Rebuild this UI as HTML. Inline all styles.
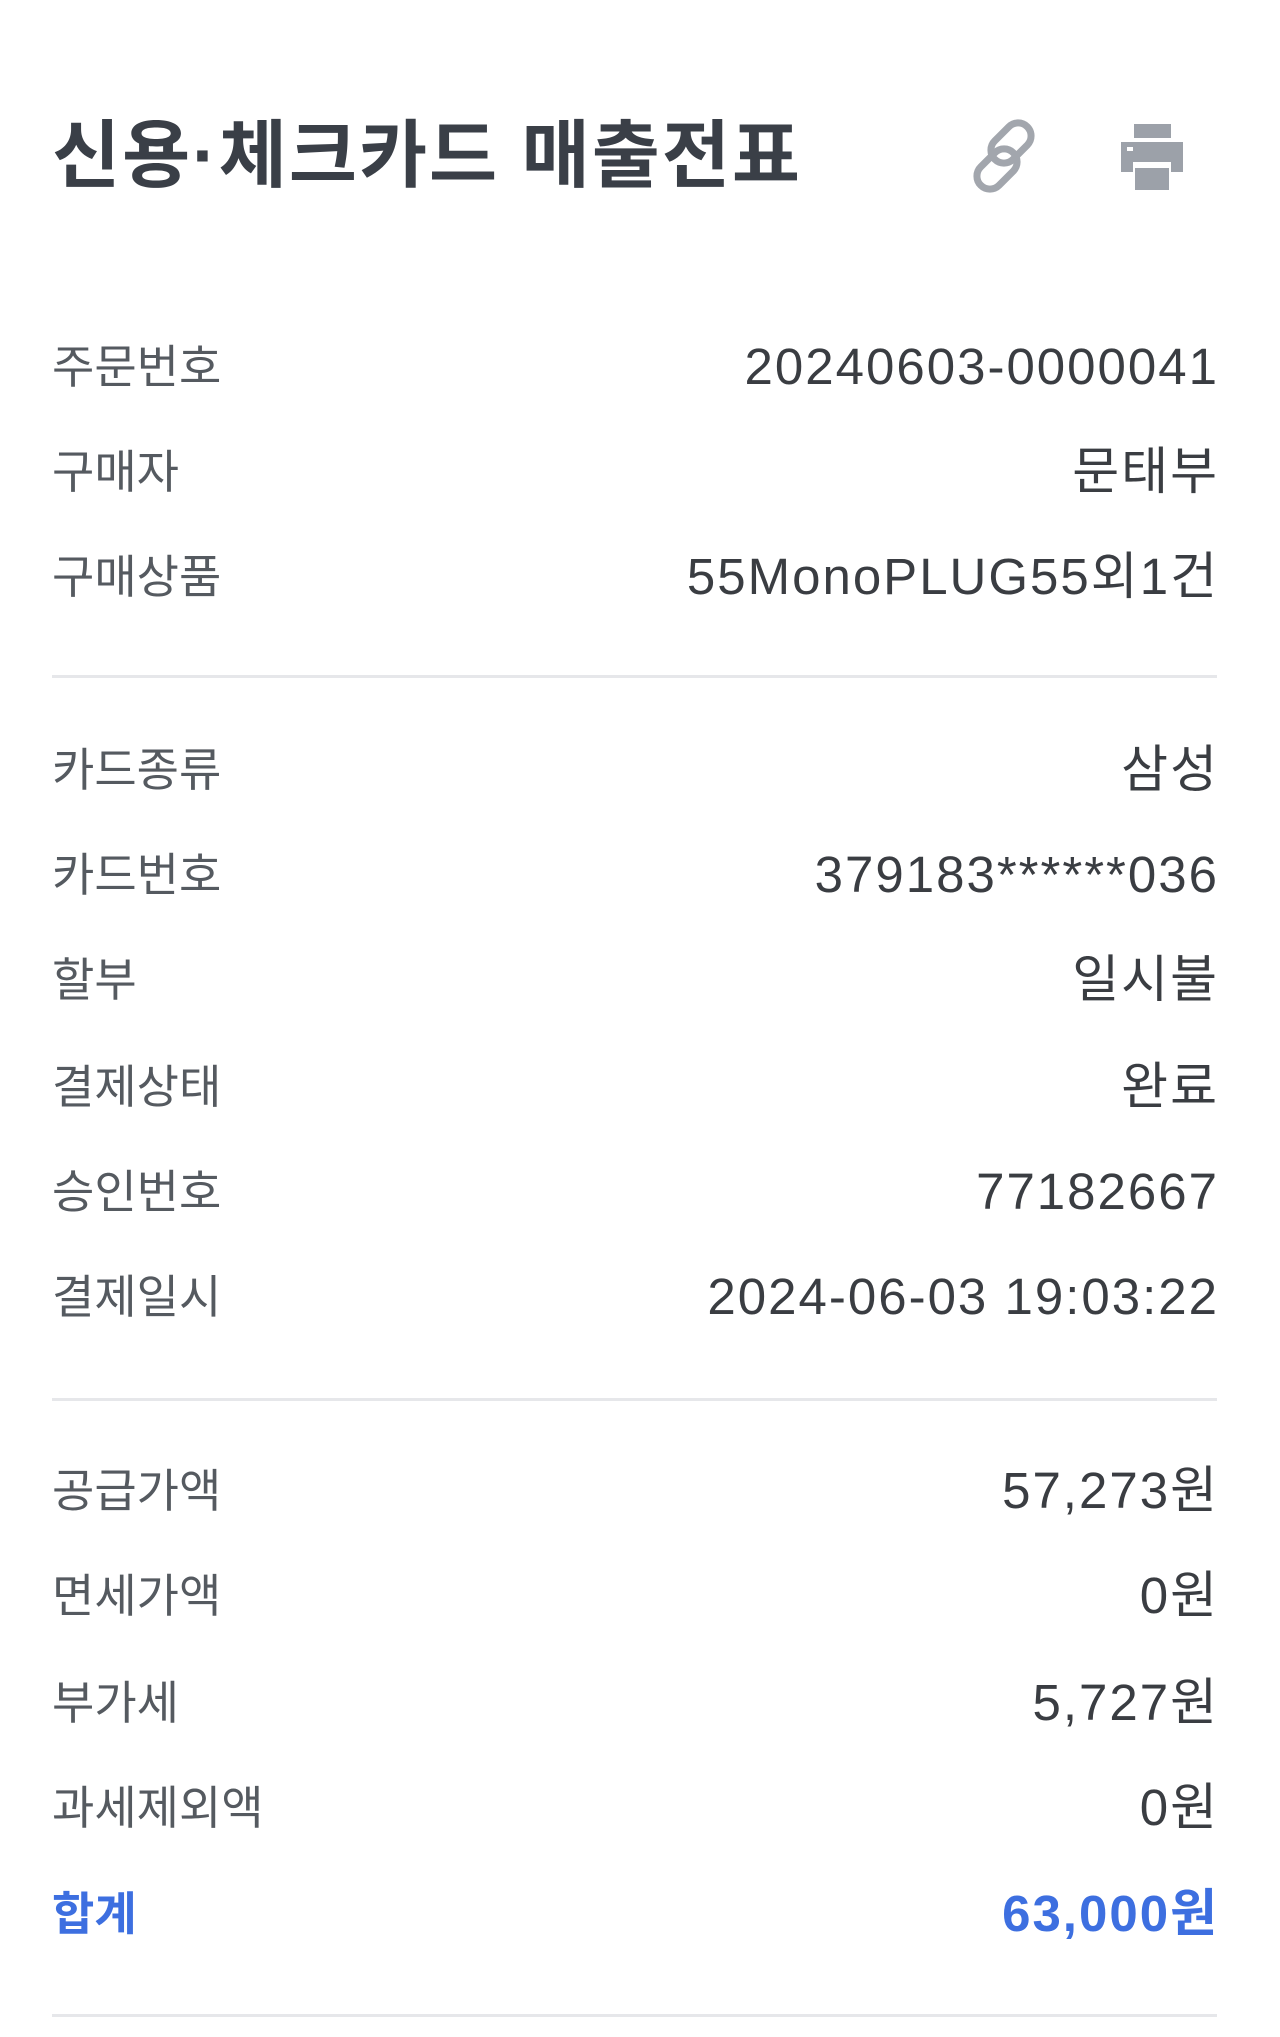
<!DOCTYPE html>
<html><head><meta charset="utf-8"><style>
html,body{margin:0;padding:0;background:#fff;}
body{width:1280px;height:2037px;position:relative;overflow:hidden;font-family:"Liberation Sans","Noto Sans CJK KR",sans-serif;}
.t{position:absolute;left:52px;top:114px;font-size:74px;font-weight:bold;color:#3a3f47;letter-spacing:2px;line-height:84px;white-space:nowrap;}
.r{position:absolute;left:52px;width:1165px;height:60px;line-height:60px;font-size:46px;}
.r .l{position:absolute;left:0;color:#555a60;}
.r .v{position:absolute;right:0;color:#3a3d42;font-size:51px;letter-spacing:2px;white-space:nowrap;margin-right:-2px;}
.r.b .l,.r.b .v{color:#3d6fe0;font-weight:bold;}
.d{position:absolute;left:52px;width:1165px;height:3px;background:#e6e7ea;}
</style></head><body>
<div class="t">신용·체크카드 매출전표</div>
<svg style="position:absolute;left:962px;top:114px" width="86" height="86" viewBox="0 0 86 86">
<g fill="none" stroke="#a2a6ad" stroke-width="7" stroke-linecap="round">
<rect x="36" y="6" width="26" height="46" rx="13" transform="rotate(45 49 29)"/>
<rect x="22" y="32" width="26" height="46" rx="13" transform="rotate(45 35 55)"/>
</g></svg>
<svg style="position:absolute;left:1118px;top:122px" width="68" height="70" viewBox="0 0 66 70">
<g fill="#9ca1a9">
<rect x="15" y="2" width="37" height="14"/>
<path d="M2 20h62v30h-12v-10H14v10H2z"/>
<rect x="16" y="46" width="34" height="22"/>
</g>
<rect x="8" y="25" width="6" height="4" fill="#fff"/>
</svg>
<div class="r" style="top:337px"><span class="l">주문번호</span><span class="v">20240603-0000041</span></div>
<div class="r" style="top:442px"><span class="l">구매자</span><span class="v">문태부</span></div>
<div class="r" style="top:547px"><span class="l">구매상품</span><span class="v">55MonoPLUG55외1건</span></div>
<div class="d" style="top:675px"></div>
<div class="r" style="top:740px"><span class="l">카드종류</span><span class="v">삼성</span></div>
<div class="r" style="top:845px"><span class="l">카드번호</span><span class="v">379183******036</span></div>
<div class="r" style="top:950px"><span class="l">할부</span><span class="v">일시불</span></div>
<div class="r" style="top:1057px"><span class="l">결제상태</span><span class="v">완료</span></div>
<div class="r" style="top:1162px"><span class="l">승인번호</span><span class="v">77182667</span></div>
<div class="r" style="top:1267px"><span class="l">결제일시</span><span class="v">2024-06-03 19:03:22</span></div>
<div class="d" style="top:1398px"></div>
<div class="r" style="top:1461px"><span class="l">공급가액</span><span class="v">57,273원</span></div>
<div class="r" style="top:1566px"><span class="l">면세가액</span><span class="v">0원</span></div>
<div class="r" style="top:1673px"><span class="l">부가세</span><span class="v">5,727원</span></div>
<div class="r" style="top:1778px"><span class="l">과세제외액</span><span class="v">0원</span></div>
<div class="r b" style="top:1884px"><span class="l">합계</span><span class="v">63,000원</span></div>
<div class="d" style="top:2014px"></div>
</body></html>
